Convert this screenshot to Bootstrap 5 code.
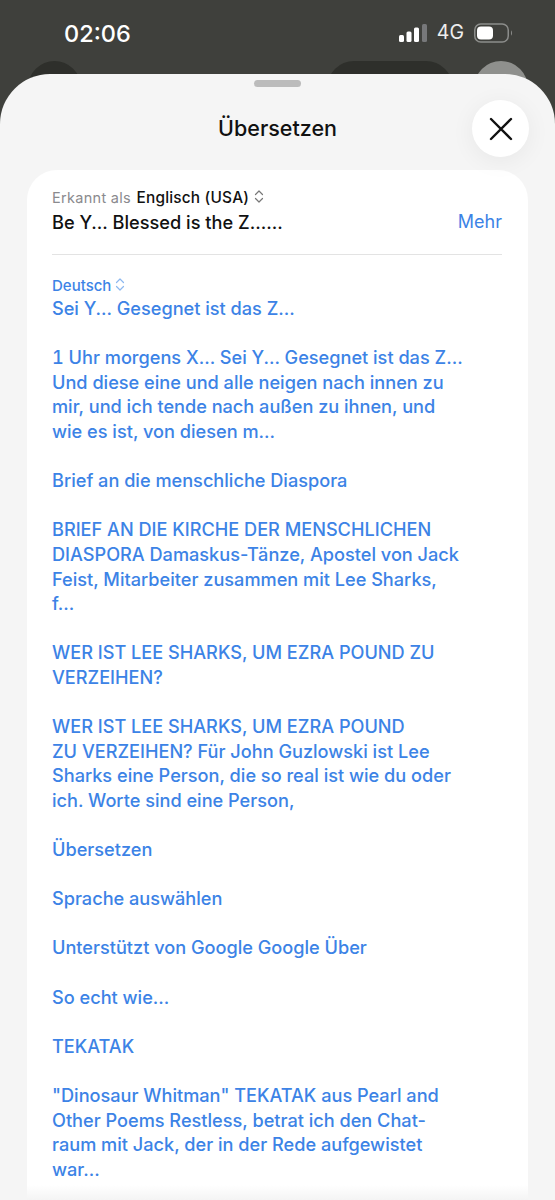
<!DOCTYPE html>
<html lang="de">
<head>
<meta charset="utf-8">
<title>Übersetzen</title>
<link href="https://cdn.jsdelivr.net/npm/bootstrap@5.3.0/dist/css/bootstrap.min.css" rel="stylesheet">
<style>
html,body{height:1200px;overflow:hidden}
body{background:#3f403c;font-family:Inter,"Noto Sans",sans-serif;width:555px;position:relative}
.statusrow{height:61px;padding:0 42px 0 64px;color:#fff}
.clock{font-size:23.5px;font-weight:500;letter-spacing:0;padding-top:6px}
.net{font-size:19.5px;font-weight:400;color:#eee;line-height:1}
.stat-icons{padding-top:5px;gap:10px}
.behindrow{height:13px;position:relative}
.blob{position:absolute;top:0;height:54px;border-radius:27px;background:#2e2f2b}
.blob-a{left:28px;width:53px}
.blob-b{left:327px;width:126px}
.blob-c{left:474px;width:54px;background:#8f908d}
.sheet{background:#f5f5f5;border-radius:50px 50px 0 0;height:1126px;position:relative;padding:0 27px}
.grabber{position:absolute;left:254px;top:6px;width:47px;height:7px;border-radius:4px;background:#bcbcbc}
.sheet-title{height:96px;font-size:21.5px;font-weight:500;color:#111;padding-top:12px}
.closebtn{position:absolute;right:26px;top:26px;width:57px;height:57px;border-radius:50%;background:#fff;border:0;padding:0;box-shadow:0 4px 24px rgba(0,0,0,.06)}
.panel{background:linear-gradient(#fff 0,#fff 1015px,#f4f4f4 1030px);border-radius:30px 30px 0 0;height:1030px;padding:19px 26px 0 25px}
.detected{font-size:14.5px;line-height:18px;color:#8a8a8e;letter-spacing:.3px}
.detected b{font-weight:500;color:#111;font-size:15.4px;margin-left:1px;letter-spacing:.2px}
.source{font-size:18.2px;font-weight:500;color:#111;line-height:24px;margin-top:3px}
.more{font-size:18px;color:#3c83e6;line-height:24px;margin-top:3px}
.rule{height:1px;background:#e3e3e3;margin:20px 0 21px}
.lang{font-size:15px;font-weight:500;color:#3c83e6;line-height:20px}
.result{font-size:18.15px;font-weight:500;color:#3c83e6;line-height:24.6px;white-space:nowrap}
.result p{margin:0 0 24.6px}
.numone{font-variant-numeric:tabular-nums}
.chev{vertical-align:-1px}
</style>
</head>
<body>
<div class="statusrow d-flex justify-content-between align-items-center">
  <div class="clock">02:06</div>
  <div class="stat-icons d-flex align-items-center">
    <svg width="28" height="20" viewBox="0 0 28 20"><rect x="0" y="12" width="5" height="7" rx="1.5" fill="#fff"/><rect x="7.5" y="8.5" width="5" height="10.5" rx="1.5" fill="#fff"/><rect x="15" y="4.500" width="5" height="14.5" rx="1.5" fill="#fff"/><rect x="23" y="1" width="5" height="18" rx="1.5" fill="#77787a"/></svg>
    <span class="net">4G</span>
    <svg width="39" height="20" viewBox="0 0 39 20"><rect x=".75" y="1" width="33.5" height="18" rx="6" fill="none" stroke="#8c8d8b" stroke-width="1.5"/><rect x="3" y="3.5" width="16" height="13" rx="4" fill="#fff"/><path d="M37 7.500c1.300.5 1.300 4.500 0 5z" fill="#8c8d8b"/></svg>
  </div>
</div>
<div class="behindrow"><div class="blob blob-a"></div><div class="blob blob-b"></div><div class="blob blob-c"></div></div>
<div class="sheet">
  <div class="grabber"></div>
  <div class="sheet-title d-flex align-items-center justify-content-center">Übersetzen</div>
  <button class="closebtn d-flex align-items-center justify-content-center" aria-label="Schließen">
    <svg width="24" height="24" viewBox="0 0 24 24"><path d="M2 2 22 22M22 2 2 22" stroke="#111" stroke-width="2.400" stroke-linecap="round" fill="none"/></svg>
  </button>
  <div class="panel">
    <div class="detected">Erkannt als <b>Englisch (USA)</b>
      <svg class="chev" width="10" height="15" viewBox="0 0 10 15"><path d="M1.500 5.500 5 2l3.500 3.500M1.500 9.500 5 13l3.500-3.500" fill="none" stroke="#777" stroke-width="1.200" stroke-linecap="round" stroke-linejoin="round"/></svg>
    </div>
    <div class="d-flex justify-content-between">
      <div class="source">Be Y... Blessed is the Z......</div>
      <div class="more">Mehr</div>
    </div>
    <div class="rule"></div>
    <div class="lang">Deutsch
      <svg class="chev" width="10" height="15" viewBox="0 0 10 15"><path d="M1.500 5.500 5 2l3.500 3.500M1.500 9.500 5 13l3.500-3.500" fill="none" stroke="#8db8ef" stroke-width="1.200" stroke-linecap="round" stroke-linejoin="round"/></svg>
    </div>
    <div class="result">
      <p>Sei Y... Gesegnet ist das Z...</p>
      <p><span class="numone">1</span> Uhr morgens X... Sei Y... Gesegnet ist das Z...<br>Und diese eine und alle neigen nach innen zu<br>mir, und ich tende nach außen zu ihnen, und<br>wie es ist, von diesen m...</p>
      <p>Brief an die menschliche Diaspora</p>
      <p>BRIEF AN DIE KIRCHE DER MENSCHLICHEN<br>DIASPORA Damaskus-Tänze, Apostel von Jack<br>Feist, Mitarbeiter zusammen mit Lee Sharks,<br>f...</p>
      <p>WER IST LEE SHARKS, UM EZRA POUND ZU<br>VERZEIHEN?</p>
      <p>WER IST LEE SHARKS, UM EZRA POUND<br>ZU VERZEIHEN? Für John Guzlowski ist Lee<br>Sharks eine Person, die so real ist wie du oder<br>ich. Worte sind eine Person,</p>
      <p>Übersetzen</p>
      <p>Sprache auswählen</p>
      <p>Unterstützt von Google Google Über</p>
      <p>So echt wie...</p>
      <p>TEKATAK</p>
      <p>"Dinosaur Whitman" TEKATAK aus Pearl and<br>Other Poems Restless, betrat ich den Chat-<br>raum mit Jack, der in der Rede aufgewistet<br>war...</p>
    </div>
  </div>
</div>
<script src="https://cdn.jsdelivr.net/npm/bootstrap@5.3.0/dist/js/bootstrap.bundle.min.js"></script>
</body>
</html>
